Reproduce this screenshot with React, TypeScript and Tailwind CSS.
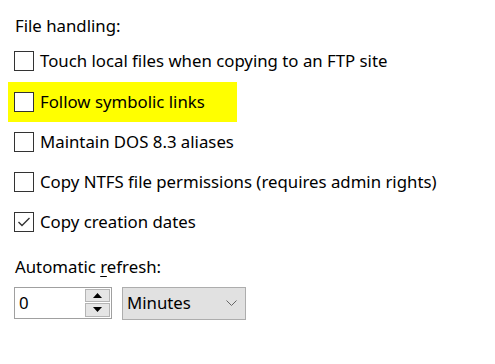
import { useState } from "react";

const font = { fontFamily: '"Noto Sans", "Open Sans", sans-serif' };

type Opt = { label: string; checked: boolean; highlight?: boolean };

const options: Opt[] = [
  { label: "Touch local files when copying to an FTP site", checked: false },
  { label: "Follow symbolic links", checked: false, highlight: true },
  { label: "Maintain DOS 8.3 aliases", checked: false },
  { label: "Copy NTFS file permissions (requires admin rights)", checked: false },
  { label: "Copy creation dates", checked: true },
];

const Box = ({ checked }: { checked: boolean }) => (
  <span className="w-[20px] h-[20px] border border-[#333333] bg-white flex items-center justify-center shrink-0">
    {checked && (
      <svg width="14" height="12" viewBox="0 0 14 12">
        <path d="M1.5 6 L5 9.5 L12.5 2" fill="none" stroke="#333" strokeWidth="1.4" />
      </svg>
    )}
  </span>
);

export default function App() {
  const [opts, setOpts] = useState(options);
  return (
    <div className="w-[495px] h-[364px] bg-white text-[16.8px] text-black leading-none" style={font}>
      <div className="pl-[15px] pt-[18px] h-[35px]">File handling:</div>
      <div className="flex flex-col pt-[6px]">
        {opts.map((o, i) => (
          <div
            key={o.label}
            className={`flex items-start pt-[10px] ${i === 0 ? "h-[41px]" : "h-[40px]"} ${o.highlight ? "bg-[#ffff00] ml-[8px] pl-[6px] w-[229px]" : "pl-[14px]"}`}
            onClick={() => setOpts(opts.map((p, j) => (j === i ? { ...p, checked: !p.checked } : p)))}
          >
            <Box checked={o.checked} />
            <span className="pt-[2px] pl-[6px]">{o.label}</span>
          </div>
        ))}
      </div>
      <div className="pl-[15px] pt-[17px]">
        Automatic <span className="underline underline-offset-[3px] decoration-1">r</span>efresh:
      </div>
      <div className="flex items-start gap-[10px] pl-[14px] pt-[11px]">
        <div className="w-[98px] h-[32px] border border-[#a0a0a0] bg-white flex items-center justify-between pl-[4px] pr-[1px]">
          <span className="pt-[1px]">0</span>
          <div className="flex flex-col gap-[1px] w-[25px]">
            <div className="h-[13px] bg-[#e5e5e5] border border-[#b4b4b4] flex items-center justify-center">
              <svg width="9" height="5" viewBox="0 0 9 5"><path d="M4.5 0 L9 5 L0 5 Z" fill="#000" /></svg>
            </div>
            <div className="h-[14px] bg-[#e5e5e5] border border-[#b4b4b4] flex items-center justify-center">
              <svg width="9" height="5" viewBox="0 0 9 5"><path d="M0 0 L9 0 L4.5 5 Z" fill="#000" /></svg>
            </div>
          </div>
        </div>
        <div className="w-[124px] h-[33px] bg-[#e1e1e1] border border-[#adadad] flex items-center justify-between pl-[4px] pr-[8px]">
          <span className="pt-[1px]">Minutes</span>
          <svg width="11" height="6" viewBox="0 0 11 6"><path d="M0.5 0.5 L5.5 5.5 L10.5 0.5" fill="none" stroke="#666" strokeWidth="1" /></svg>
        </div>
      </div>
    </div>
  );
}
